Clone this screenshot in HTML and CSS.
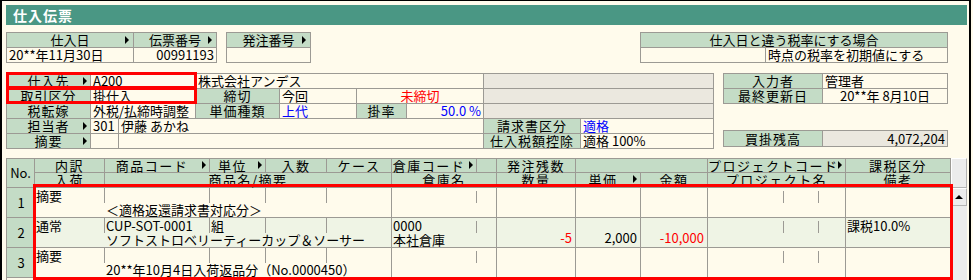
FILE: index.html
```html
<!DOCTYPE html>
<html lang="ja">
<head>
  <meta charset="UTF-8">
  <title>仕入伝票</title>
  <link rel="stylesheet" href="styles.css">
</head>
<body>
  <div class="frame">
    <div class="title">仕入伝票</div>

    <!-- 伝票ヘッダ -->
    <div class="top">
      <div class="box box-date">
        <div class="hd arrow">仕入日</div>
        <div class="hd arrow">伝票番号</div>
        <div class="val">20**年11月30日</div>
        <div class="val num">00991193</div>
      </div>
      <div class="box box-order">
        <div class="hd arrow">発注番号</div>
        <div class="val"></div>
      </div>
      <div class="box box-tax">
        <div class="hd s2">仕入日と違う税率にする場合</div>
        <div class="val"></div>
        <div class="val">時点の税率を初期値にする</div>
      </div>
    </div>

    <!-- 仕入先情報 -->
    <div class="mid">
      <div class="form">
        <div class="lbl arrow">仕入先</div>
        <div class="val s2">A200</div>
        <div class="val s4">株式会社アンデス</div>
        <div class="off s2"></div>

        <div class="lbl">取引区分</div>
        <div class="val s2">掛仕入</div>
        <div class="lbl">締切</div>
        <div class="val">今回</div>
        <div class="val s2 red center">未締切</div>
        <div class="off s2"></div>

        <div class="lbl">税転嫁</div>
        <div class="val s2">外税/払締時調整</div>
        <div class="lbl">単価種類</div>
        <div class="val blue">上代</div>
        <div class="lbl">掛率</div>
        <div class="val blue num">50.0 %</div>
        <div class="off s2"></div>

        <div class="lbl arrow">担当者</div>
        <div class="val">301</div>
        <div class="val s5">伊藤 あかね</div>
        <div class="lbl">請求書区分</div>
        <div class="val blue">適格</div>

        <div class="lbl arrow">摘要</div>
        <div class="val"></div>
        <div class="val s5"></div>
        <div class="lbl">仕入税額控除</div>
        <div class="val">適格 100%</div>
      </div>

      <div class="side">
        <div class="pair">
          <div class="lbl">入力者</div>
          <div class="val">管理者</div>
          <div class="lbl">最終更新日</div>
          <div class="val center">20**年 8月10日</div>
        </div>
        <div class="pair balance">
          <div class="lbl">買掛残高</div>
          <div class="off num">4,072,204</div>
        </div>
      </div>
    </div>

    <!-- 明細 -->
    <div class="detail">
      <div class="lines">
        <div class="dhead">
          <div class="th no">No.</div>
          <div class="th">内訳</div>
          <div class="th arrow">商品コード</div>
          <div class="th arrow">単位</div>
          <div class="th">入数</div>
          <div class="th">ケース</div>
          <div class="th arrow">倉庫コード</div>
          <div class="th"></div>
          <div class="th">発注残数</div>
          <div class="th s2"></div>
          <div class="th arrow">プロジェクトコード</div>
          <div class="th">課税区分</div>
          <div class="th">入荷</div>
          <div class="th s4">商品名/摘要</div>
          <div class="th s2">倉庫名</div>
          <div class="th">数量</div>
          <div class="th arrow">単価</div>
          <div class="th">金額</div>
          <div class="th">プロジェクト名</div>
          <div class="th">備考</div>
        </div>

        <div class="drow">
          <div class="td no">1</div>
          <div class="td up cut">摘要</div>
          <div class="td up cut"></div>
          <div class="td up cut"></div>
          <div class="td up cut"></div>
          <div class="td up cut"></div>
          <div class="td up tick"></div>
          <div class="td up cut"></div>
          <div class="td fig"></div>
          <div class="td fig"></div>
          <div class="td fig"></div>
          <div class="td prj"></div>
          <div class="td note"></div>
          <div class="td down"></div>
          <div class="td down cut s4">＜適格返還請求書対応分＞</div>
          <div class="td down cut s2"></div>
        </div>

        <div class="drow alt">
          <div class="td no">2</div>
          <div class="td up cut">通常</div>
          <div class="td up cut">CUP-SOT-0001</div>
          <div class="td up cut">組</div>
          <div class="td up cut"></div>
          <div class="td up cut"></div>
          <div class="td up tick">0000</div>
          <div class="td up cut"></div>
          <div class="td fig red">-5</div>
          <div class="td fig">2,000</div>
          <div class="td fig red">-10,000</div>
          <div class="td prj"></div>
          <div class="td note">課税10.0%</div>
          <div class="td down"></div>
          <div class="td down cut s4">ソフトストロベリーティーカップ＆ソーサー</div>
          <div class="td down cut s2">本社倉庫</div>
        </div>

        <div class="drow">
          <div class="td no">3</div>
          <div class="td up cut">摘要</div>
          <div class="td up cut"></div>
          <div class="td up cut"></div>
          <div class="td up cut"></div>
          <div class="td up cut"></div>
          <div class="td up tick"></div>
          <div class="td up cut"></div>
          <div class="td fig"></div>
          <div class="td fig"></div>
          <div class="td fig"></div>
          <div class="td prj"></div>
          <div class="td note"></div>
          <div class="td down"></div>
          <div class="td down cut s4">20**年10月4日入荷返品分（No.0000450）</div>
          <div class="td down cut s2"></div>
        </div>
      </div>

      <div class="vscroll">
        <div class="sb-head"></div>
        <div class="sb-up"></div>
        <div class="sb-track"></div>
      </div>
    </div>

    <!-- 注目枠 -->
    <div class="mark mark-supplier"></div>
    <div class="mark mark-kind"></div>
    <div class="mark mark-lines"></div>
  </div>
</body>
</html>
```

FILE: styles.css
```css
* {
  box-sizing: border-box;
}

html, body {
  margin: 0;
  padding: 0;
  height: 100%;
  background: #fffbec;
  font-family: "Noto Sans CJK JP", sans-serif;
  font-size: 13px;
  color: #000;
  overflow: hidden;
}

.frame {
  position: relative;
  width: 971px;
  height: 280px;
  padding: 4px 2px 0 4px;
  border-top: 1px solid #000;
  border-left: 2px solid #000;
  border-right: 2px solid #000;
}

.title {
  height: 20px;
  line-height: 20px;
  padding-left: 7px;
  background: #4a9784;
  color: #fff;
  font-size: 14px;
  font-weight: bold;
  letter-spacing: 1px;
}

/* 共通セル */
.hd, .lbl, .th {
  position: relative;
  background: #c4dcc6;
  text-align: center;
  white-space: nowrap;
}

.val, .off {
  background: #fffbec;
  padding: 0 2px;
  white-space: nowrap;
}

.off {
  background: #ebe8df;
}

.num { text-align: right; }
.center { text-align: center; }
.red { color: #f00; }
.blue { color: #00f; }

.s2 { grid-column: span 2; }
.s4 { grid-column: span 4; }
.s5 { grid-column: span 5; }

.arrow::after {
  content: "";
  position: absolute;
  right: 4px;
  top: 3px;
  border-left: 4px solid #000;
  border-top: 4px solid transparent;
  border-bottom: 4px solid transparent;
}

/* ヘッダ */
.top {
  display: flex;
  align-items: flex-start;
  margin-top: 7px;
}

.box, .form, .pair {
  display: grid;
  gap: 1px;
  background: #9c9a94;
  border: 1px solid #9c9a94;
  grid-auto-rows: 14px;
  line-height: 14px;
}

.box-date { grid-template-columns: 126px 82px; }
.box-order { grid-template-columns: 83px; margin-left: 9px; }
.box-tax { grid-template-columns: 124px 181px; margin-left: 329px; }

/* 仕入先情報 */
.mid {
  display: flex;
  align-items: flex-start;
  margin-top: 10px;
}

.form {
  grid-template-columns: 83px 27px 76px 83px 76px 49px 76px 96px 132px;
}

.lbl {
  letter-spacing: 1px;
}

.form .arrow::after {
  right: 3px;
}

.side {
  margin-left: 9px;
}

.pair {
  grid-template-columns: 98px 124px;
}

.pair.balance {
  margin-top: 26px;
  grid-auto-rows: 15px;
  line-height: 15px;
}

/* 明細 */
.detail {
  display: flex;
  margin-top: 9px;
}

.lines {
  border-left: 1px solid #9c9a94;
  border-top: 1px solid #9c9a94;
}

.dhead, .drow {
  display: grid;
  grid-template-columns: 28px 70px 105px 56px 61px 65px 85px 20px 79px 65px 67px 138px 105px;
}

.dhead {
  grid-template-rows: 14px 15px;
}

.th {
  line-height: 13px;
  letter-spacing: 1.5px;
  border-right: 1px solid #9c9a94;
  border-bottom: 1px solid #9c9a94;
}

.th.arrow {
  padding-right: 10px;
}

.th.arrow::after {
  top: 2px;
  right: 3px;
}

.th.no {
  grid-row: span 2;
  line-height: 28px;
  letter-spacing: 0;
}

.drow {
  grid-template-rows: 15px 15px;
  background: #fffbec;
}

.drow.alt {
  background: #eff4e5;
}

.td {
  padding-left: 1px;
  line-height: 15px;
  white-space: nowrap;
}

.td.cut {
  border-right: 1px solid #9c9a94;
}

.td.down {
  border-bottom: 1px solid #9c9a94;
  line-height: 14px;
}

.td.tick {
  background: linear-gradient(#9c9a94, #9c9a94) no-repeat right 0 top 3px / 1px 12px;
}

.td.no, .td.fig, .td.prj, .td.note {
  grid-row: span 2;
  border-right: 1px solid #9c9a94;
  border-bottom: 1px solid #9c9a94;
}

.td.no {
  background: #c4dcc6;
  text-align: center;
  line-height: 29px;
}

.td.fig {
  display: flex;
  align-items: flex-end;
  justify-content: flex-end;
  padding: 0 3px 2px 0;
}

.td.prj {
  background:
    linear-gradient(#9c9a94, #9c9a94) no-repeat 75px 3px / 1px 12px,
    linear-gradient(#9c9a94, #9c9a94) no-repeat 110px 3px / 1px 12px;
}

/* スクロールバー */
.vscroll {
  display: flex;
  flex-direction: column;
  width: 16px;
  height: 125px;
  background: #ececec;
}

.sb-head {
  height: 30px;
  border: 1px solid #b4b4b4;
  border-left-color: #fff;
  border-top-color: #fff;
  background: #ececec;
}

.sb-up {
  display: flex;
  align-items: center;
  justify-content: center;
  height: 18px;
  border: 1px solid #b4b4b4;
  border-left-color: #fff;
  border-top-color: #fff;
}

.sb-up::before {
  content: "";
  border-bottom: 4px solid #000;
  border-left: 4px solid transparent;
  border-right: 4px solid transparent;
}

.sb-track {
  flex: 1;
  border-left: 1px solid #fff;
}

/* 赤枠 */
.mark {
  position: absolute;
  border: 3px solid #f00;
}

.mark-supplier {
  left: 4px;
  top: 71px;
  width: 191px;
  height: 17px;
}

.mark-kind {
  left: 4px;
  top: 86px;
  width: 191px;
  height: 17px;
}

.mark-lines {
  left: 31px;
  top: 183px;
  width: 920px;
  height: 96px;
}
```
